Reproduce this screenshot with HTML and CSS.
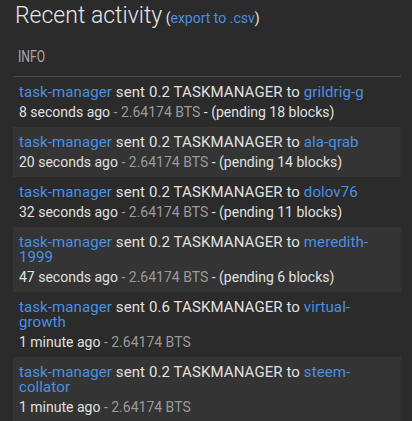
FILE: index.html
```html
<!DOCTYPE html>
<html>
<head>
<meta charset="utf-8">
<link rel="stylesheet" href="styles.css">
</head>
<body>
<div class="wrap">
  <h3 class="title">Recent activity<span class="export"> (<a href="#">export to .csv</a>)</span></h3>
  <table class="activity">
    <thead>
      <tr><th><span class="info">INFO</span></th></tr>
    </thead>
    <tbody>
      <tr><td>
        <div class="desc"><a href="#">task-manager</a> sent 0.2 TASKMANAGER to <a href="#">grildrig-g</a></div>
        <div class="meta">8 seconds ago <span class="fee">- 2.64174 BTS</span> - (pending 18 blocks)</div>
      </td></tr>
      <tr><td>
        <div class="desc"><a href="#">task-manager</a> sent 0.2 TASKMANAGER to <a href="#">ala-qrab</a></div>
        <div class="meta">20 seconds ago <span class="fee">- 2.64174 BTS</span> - (pending 14 blocks)</div>
      </td></tr>
      <tr><td>
        <div class="desc"><a href="#">task-manager</a> sent 0.2 TASKMANAGER to <a href="#">dolov76</a></div>
        <div class="meta">32 seconds ago <span class="fee">- 2.64174 BTS</span> - (pending 11 blocks)</div>
      </td></tr>
      <tr><td>
        <div class="desc"><a href="#">task-manager</a> sent 0.2 TASKMANAGER to <a href="#">meredith-1999</a></div>
        <div class="meta">47 seconds ago <span class="fee">- 2.64174 BTS</span> - (pending 6 blocks)</div>
      </td></tr>
      <tr><td>
        <div class="desc"><a href="#">task-manager</a> sent 0.6 TASKMANAGER to <a href="#">virtual-growth</a></div>
        <div class="meta">1 minute ago <span class="fee">- 2.64174 BTS</span></div>
      </td></tr>
      <tr><td>
        <div class="desc"><a href="#">task-manager</a> sent 0.2 TASKMANAGER to <a href="#">steem-collator</a></div>
        <div class="meta">1 minute ago <span class="fee">- 2.64174 BTS</span></div>
      </td></tr>
    </tbody>
  </table>
</div>
</body>
</html>
```

FILE: styles.css
```css
html, body {
  margin: 0;
  padding: 0;
  background: #2b2b2b;
  overflow: hidden;
}
body {
  font-family: Roboto, "Liberation Sans", sans-serif;
  color: #e0e0e0;
}
a {
  color: #4a90e2;
  text-decoration: none;
}
.wrap {
  padding: 0 11px 0 13px;
}
.title {
  margin: 0;
  padding: 2px 0 0 2px;
  font-size: 23px;
  line-height: 28px;
  font-weight: 300;
  color: #e6e6e6;
}
.export {
  font-size: 14px;
  font-weight: 400;
  color: #e6e6e6;
}
.activity {
  width: 100%;
  border-collapse: collapse;
}
.activity th {
  text-align: left;
  font-weight: 400;
  padding: 15px 5px 9px;
  line-height: 20px;
  border-bottom: 1px solid #4a4a4a;
}
.info {
  display: inline-block;
  font-size: 16.5px;
  color: #a8a8a8;
  transform: scaleX(0.74);
  transform-origin: left center;
}
.activity td {
  padding: 8px 12px 5px 6px;
}
.activity tbody tr:nth-child(even) td {
  background: #343434;
}
.desc {
  font-size: 15px;
  line-height: 15px;
  letter-spacing: 0.1px;
}
.meta {
  margin-top: 2px;
  font-size: 14px;
  line-height: 20px;
}
.fee {
  color: #9a9a9a;
}
```
